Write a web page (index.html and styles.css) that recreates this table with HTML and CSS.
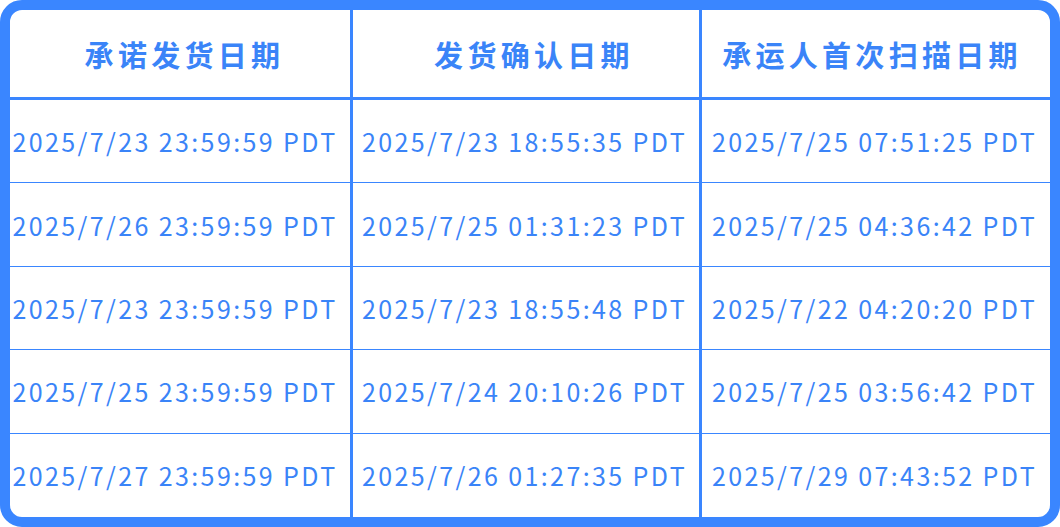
FILE: index.html
```html
<!DOCTYPE html>
<html lang="zh">
<head>
<meta charset="utf-8">
<link rel="stylesheet" href="styles.css">
</head>
<body>
<div class="table">
  <div class="cell head h1">承诺发货日期</div>
  <div class="cell head h2">发货确认日期</div>
  <div class="cell head h3">承运人首次扫描日期</div>

  <div class="cell">2025/7/23 23:59:59 PDT</div>
  <div class="cell">2025/7/23 18:55:35 PDT</div>
  <div class="cell">2025/7/25 07:51:25 PDT</div>

  <div class="cell">2025/7/26 23:59:59 PDT</div>
  <div class="cell">2025/7/25 01:31:23 PDT</div>
  <div class="cell">2025/7/25 04:36:42 PDT</div>

  <div class="cell">2025/7/23 23:59:59 PDT</div>
  <div class="cell">2025/7/23 18:55:48 PDT</div>
  <div class="cell">2025/7/22 04:20:20 PDT</div>

  <div class="cell">2025/7/25 23:59:59 PDT</div>
  <div class="cell">2025/7/24 20:10:26 PDT</div>
  <div class="cell">2025/7/25 03:56:42 PDT</div>

  <div class="cell last">2025/7/27 23:59:59 PDT</div>
  <div class="cell last">2025/7/26 01:27:35 PDT</div>
  <div class="cell last">2025/7/29 07:43:52 PDT</div>
</div>
</body>
</html>
```
FILE: styles.css
```css
html, body {
  margin: 0;
  padding: 0;
  background: #ffffff;
}

.table {
  box-sizing: border-box;
  width: 1060px;
  height: 527px;
  border: 10px solid #3a86ff;
  border-radius: 22px;
  display: grid;
  grid-template-columns: 343px 349px 348px;
  grid-template-rows: 90px repeat(5, 1fr);
  overflow: hidden;
  background: #ffffff;
}

.cell {
  box-sizing: border-box;
  display: flex;
  align-items: center;
  justify-content: center;
  padding-right: 3px;
  border-bottom: 1px solid #3a86ff;
  color: #3a84f8;
  font-family: "Noto Sans CJK SC", "Noto Sans", sans-serif;
  font-size: 25px;
  letter-spacing: 2.4px;
  white-space: nowrap;
}

.cell:nth-child(3n+1),
.cell:nth-child(3n+2) {
  border-right: 3px solid #3a86ff;
}

.cell:nth-child(3n+1) {
  padding-right: 10px;
}

.head {
  border-bottom: 3px solid #3a86ff;
  font-weight: 700;
  font-size: 29px;
  letter-spacing: 4.3px;
}

.table .h1 {
  padding-right: 0;
  padding-left: 9px;
}

.table .h2 {
  padding-right: 0;
  padding-left: 16px;
}

.table .h3 {
  padding-right: 8px;
}

.last {
  border-bottom: none;
}
```
